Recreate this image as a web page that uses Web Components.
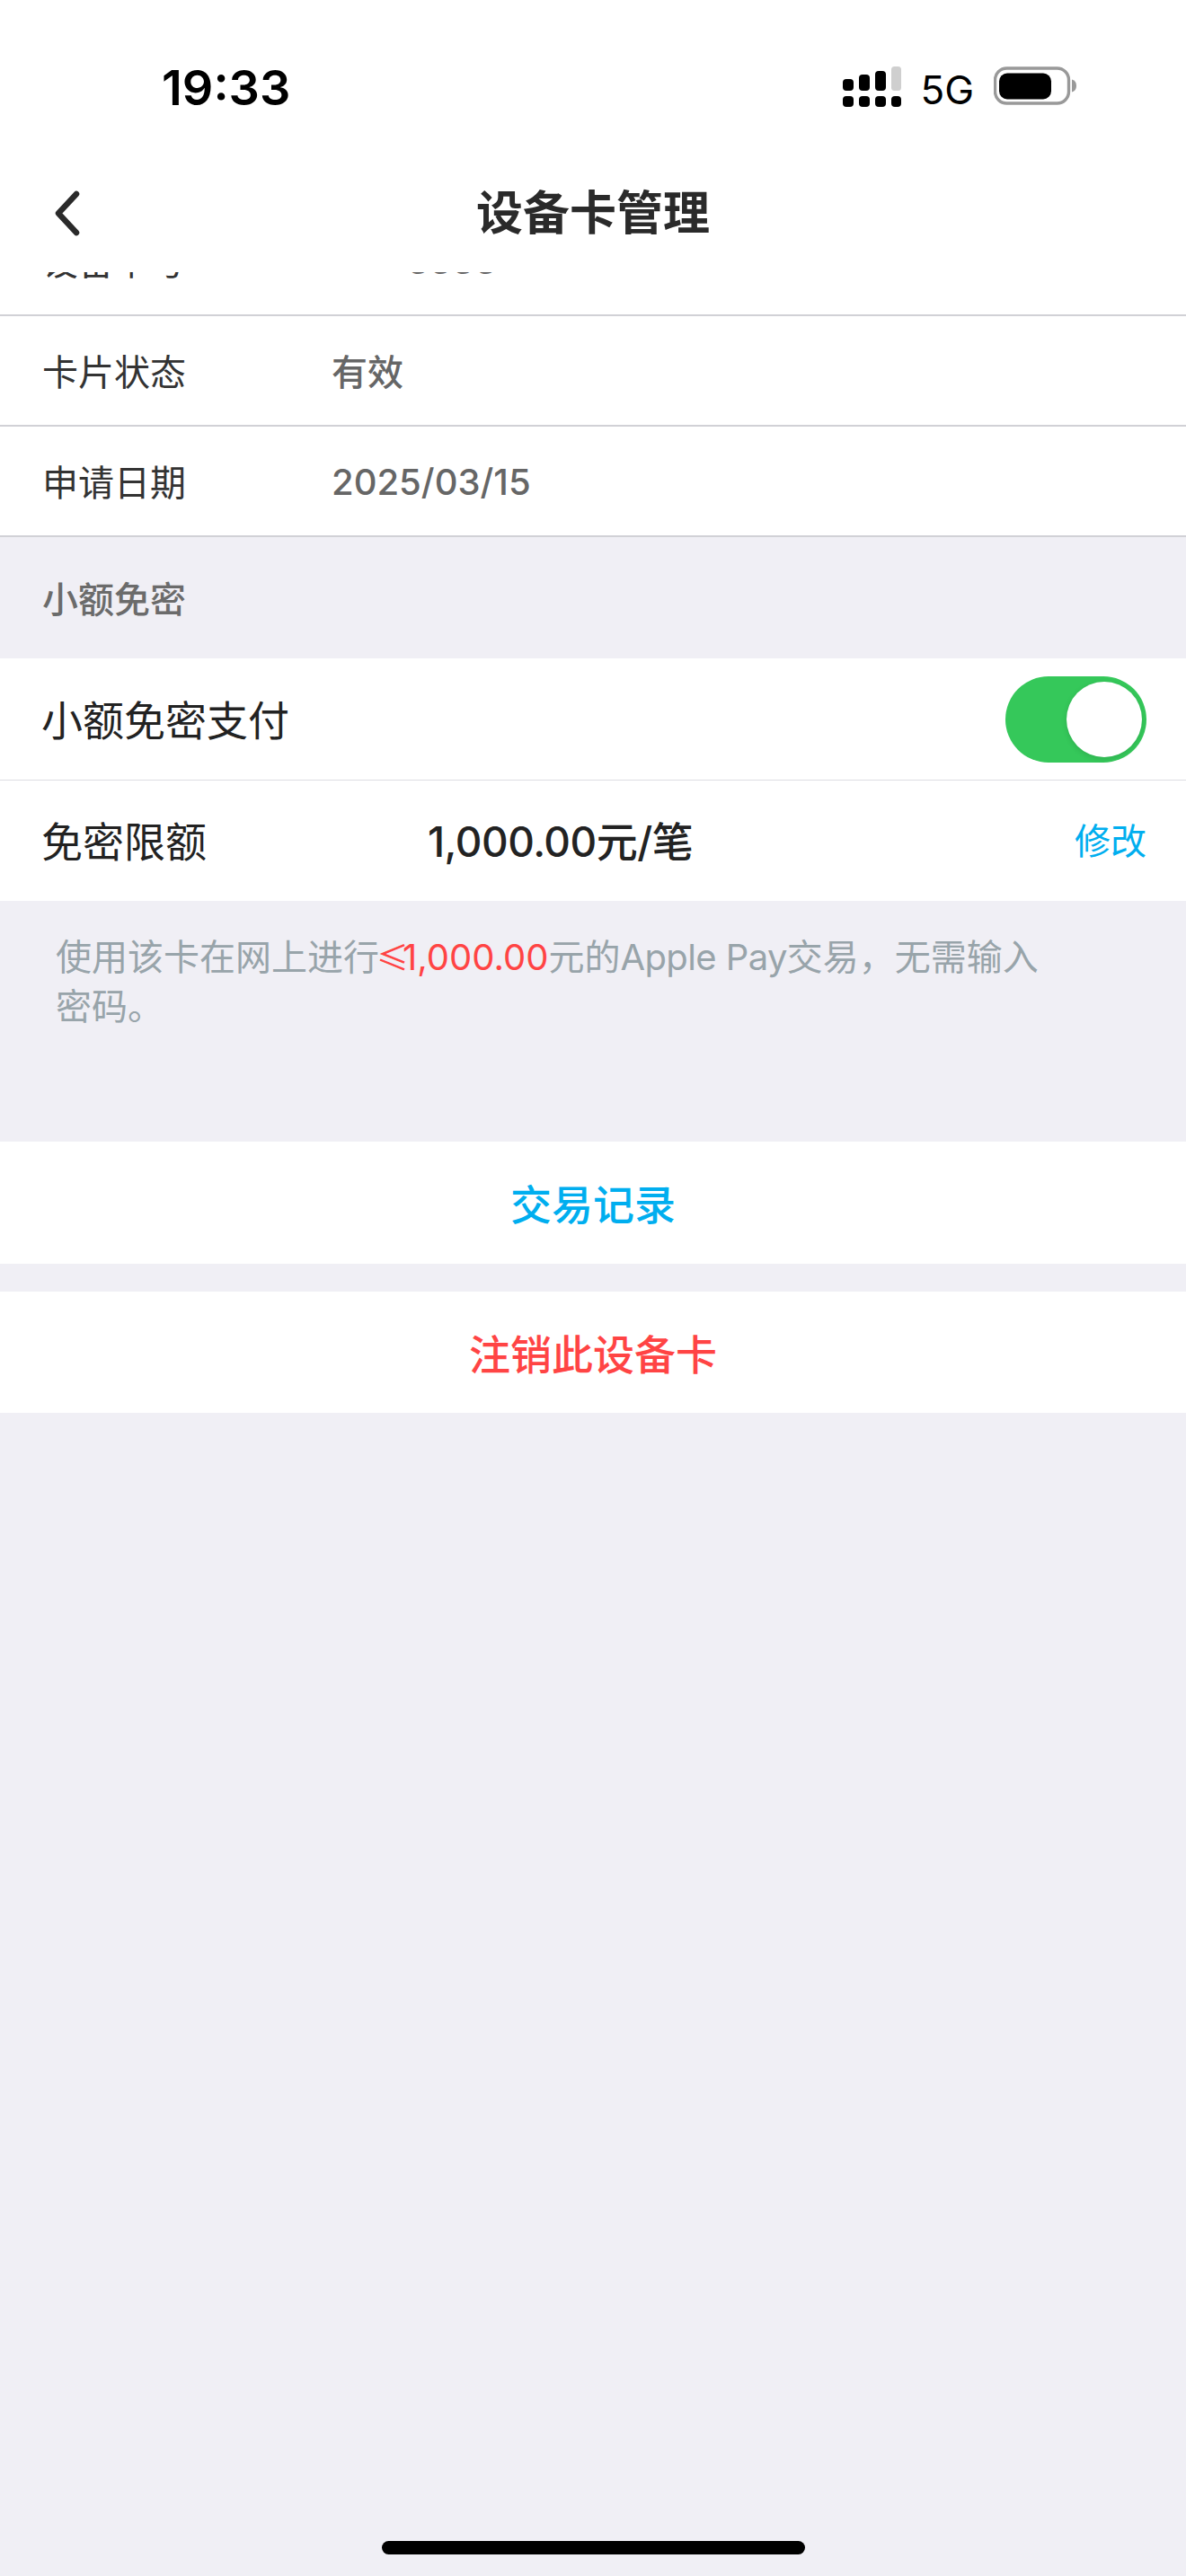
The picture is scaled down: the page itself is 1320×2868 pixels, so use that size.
<!DOCTYPE html>
<html lang="zh-CN">
<head>
<meta charset="utf-8">
<title>设备卡管理</title>
<style>
  html, body { margin: 0; padding: 0; }
  body {
    background: #f0eff5;
    font-family: Inter, "Noto Sans CJK SC", sans-serif;
    color: #222;
  }
  .page { display: flex; flex-direction: column; height: 2868px; overflow: hidden; }
  .scroll { flex: 1; min-height: 0; overflow: hidden; }
  .latin { letter-spacing: -0.6px; }
  .lte { font-family: "Noto Sans CJK SC", sans-serif; font-size: 36px; letter-spacing: -7px; margin-left: -3px; }
</style>
</head>
<body>
<div class="page">
  <status-bar></status-bar>
  <nav-bar>设备卡管理</nav-bar>
  <div class="scroll">
    <info-list>
      <info-row label="设备卡号" style="word-spacing: -10px; --value-shift: 3px">**** 3333</info-row>
      <info-row label="卡片状态">有效</info-row>
      <info-row label="申请日期" style="--value-shift: 3px">2025/03/15</info-row>
    </info-list>
    <section-title>小额免密</section-title>
    <quick-pay limit="1,000.00元/笔"></quick-pay>
    <pay-note>使用该卡在网上进行<b><span class="lte">≤</span>1,000.00</b>元的<span class="latin">Apple Pay</span>交易，无需输入密码。</pay-note>
    <action-list>
      <action-button color="#00aeef">交易记录</action-button>
      <action-button color="#ff4444">注销此设备卡</action-button>
    </action-list>
  </div>
  <home-indicator></home-indicator>
</div>

<script>
class StatusBar extends HTMLElement {
  constructor() {
    super();
    this.attachShadow({ mode: "open" });
  }

  connectedCallback() {
    this.shadowRoot.innerHTML = `
      <style>
        :host { display: flex; justify-content: space-between; height: 170px; background: #fff; color: #000; box-sizing: border-box; padding: 64px 122px 0 180px; }
        .time { font: 600 54px/68px Inter, sans-serif; }
        .right { display: flex; gap: 20px; align-items: flex-start; padding-top: 10px; }
        .net { font: 400 44px/52px Inter, sans-serif; margin-right: 2px; }
        svg { display: block; }
      </style>
      <div class="time">19:33</div>
      <div class="right">
        <svg width="66" height="46" viewBox="0 0 66 46">
          <rect x="0" y="14" width="12" height="13" rx="4" fill="#000"/>
          <rect x="18" y="9" width="12" height="18" rx="4" fill="#000"/>
          <rect x="36" y="5" width="12" height="22" rx="4" fill="#000"/>
          <rect x="54" y="0" width="11" height="27" rx="3.5" fill="#cfcfcf"/>
          <rect x="0" y="33" width="12" height="12" rx="4" fill="#000"/>
          <rect x="18" y="33" width="12" height="12" rx="4" fill="#000"/>
          <rect x="36" y="33" width="12" height="12" rx="4" fill="#000"/>
          <rect x="54" y="33" width="11" height="12" rx="4" fill="#000"/>
        </svg>
        <span class="net">5G</span>
        <svg width="92" height="44" viewBox="0 0 92 44">
          <rect x="1.5" y="2" width="82" height="39" rx="13" fill="none" stroke="#999" stroke-width="3.4"/>
          <rect x="6" y="7.5" width="58" height="29" rx="9" fill="#000"/>
          <path d="M87 14.5 c3.5 1 5 3.5 5 7 s-1.500 6 -5 7 z" fill="#999"/>
        </svg>
      </div>
    `;
  }
}

class NavBar extends HTMLElement {
  constructor() {
    super();
    this.attachShadow({ mode: "open" });
  }

  connectedCallback() {
    this.shadowRoot.innerHTML = `
      <style>
        :host { display: grid; grid-template-columns: 1fr auto 1fr; align-items: center; height: 133px; background: #fff; color: #2a2a2a; box-sizing: border-box; padding: 0 60px; }
        .title { font: 700 52px/1.2 "Noto Sans CJK SC", sans-serif; padding-bottom: 5px; }
        svg { display: block; }
      </style>
      <svg width="32" height="52" viewBox="0 0 32 52">
        <path d="M25 5 L5 26.500 L25 48" fill="none" stroke="#2a2a2a" stroke-width="6.500" stroke-linecap="round" stroke-linejoin="round"/>
      </svg>
      <div class="title"><slot></slot></div>
      <div></div>
    `;
  }
}

class InfoList extends HTMLElement {
  constructor() {
    super();
    this.attachShadow({ mode: "open" });
  }

  connectedCallback() {
    // scrolled: the first row sits partly under the nav bar
    this.shadowRoot.innerHTML = `
      <style>
        :host { display: block; margin-top: -74px; background: #fff; }
      </style>
      <slot></slot>
    `;
  }
}

class InfoRow extends HTMLElement {
  constructor() {
    super();
    this.attachShadow({ mode: "open" });
  }

  connectedCallback() {
    this.shadowRoot.innerHTML = `
      <style>
        :host { display: flex; align-items: center; height: 123px; box-sizing: border-box; border-bottom: 2px solid #d1d1d6; padding: 0 0 2px 47px; font-size: 40px; }
        .label { width: 322px; color: #333; font-family: Inter, "Noto Sans CJK SC", sans-serif; }
        .value { color: #666; font-weight: 500; font-family: Inter, "Noto Sans CJK SC", sans-serif; padding-top: var(--value-shift, 0); }
      </style>
      <div class="label"></div>
      <div class="value"><slot></slot></div>
    `;
    this.shadowRoot.querySelector(".label").textContent = this.getAttribute("label");
  }
}

class SectionTitle extends HTMLElement {
  constructor() {
    super();
    this.attachShadow({ mode: "open" });
  }

  connectedCallback() {
    this.shadowRoot.innerHTML = `
      <style>
        :host { display: flex; align-items: center; height: 135px; padding: 4px 47px 0; box-sizing: border-box; color: #6b6b6b; font: 500 40px/1.2 Inter, "Noto Sans CJK SC", sans-serif; }
      </style>
      <slot></slot>
    `;
  }
}

class QuickPay extends HTMLElement {
  constructor() {
    super();
    this.attachShadow({ mode: "open" });
  }

  connectedCallback() {
    this.shadowRoot.innerHTML = `
      <style>
        :host { display: block; background: #fff; font: 400 46px/1.2 Inter, "Noto Sans CJK SC", sans-serif; color: #222; }
        .row { display: flex; align-items: center; height: 135px; box-sizing: border-box; padding: 0 44px 0 46px; }
        .row + .row { border-top: 1.500px solid #dcdce2; }
        .name { flex: 1; padding-top: 4px; }
        .row.limit .name { flex: none; width: 430px; }
        .amount { flex: 1; font-weight: 500; padding-top: 4px; letter-spacing: -0.5px; }
        .edit { color: #00aeef; font-size: 40px; padding-top: 2px; }
        .toggle { display: block; width: 157px; height: 96px; border-radius: 48px; background: #35c85a; position: relative; }
        .toggle::after { content: ""; position: absolute; left: 68px; top: 6px; width: 84px; height: 84px; border-radius: 50%; background: #fff; box-shadow: 0 2px 6px rgba(0, 0, 0, 0.12); }
      </style>
      <div class="row">
        <div class="name">小额免密支付</div>
        <span class="toggle"></span>
      </div>
      <div class="row limit">
        <div class="name">免密限额</div>
        <div class="amount"></div>
        <div class="edit">修改</div>
      </div>
    `;
    this.shadowRoot.querySelector(".amount").textContent = this.getAttribute("limit");
  }
}

class PayNote extends HTMLElement {
  constructor() {
    super();
    this.attachShadow({ mode: "open" });
  }

  connectedCallback() {
    this.shadowRoot.innerHTML = `
      <style>
        :host { display: block; height: 268px; box-sizing: border-box; padding: 34px 150px 0 62px; color: #98a4aa; font: 400 40px/55px Inter, "Noto Sans CJK SC", sans-serif; }
        ::slotted(b) { color: #ff4444; font-weight: 400; }
      </style>
      <slot></slot>
    `;
  }
}

class ActionList extends HTMLElement {
  constructor() {
    super();
    this.attachShadow({ mode: "open" });
  }

  connectedCallback() {
    this.shadowRoot.innerHTML = `
      <style>
        :host { display: flex; flex-direction: column; gap: 31px; }
      </style>
      <slot></slot>
    `;
  }
}

class ActionButton extends HTMLElement {
  constructor() {
    super();
    this.attachShadow({ mode: "open" });
  }

  connectedCallback() {
    this.shadowRoot.innerHTML = `
      <style>
        :host { display: flex; align-items: center; justify-content: center; height: 135.5px; background: #fff; font: 500 46px/1.2 "Noto Sans CJK SC", sans-serif; color: ${this.getAttribute("color")}; }
      </style>
      <slot></slot>
    `;
  }
}

class HomeIndicator extends HTMLElement {
  constructor() {
    super();
    this.attachShadow({ mode: "open" });
  }

  connectedCallback() {
    this.shadowRoot.innerHTML = `
      <style>
        :host { display: flex; justify-content: center; padding-bottom: 24px; }
        div { width: 471px; height: 15px; border-radius: 8px; background: #000; }
      </style>
      <div></div>
    `;
  }
}

customElements.define("status-bar", StatusBar);
customElements.define("nav-bar", NavBar);
customElements.define("info-list", InfoList);
customElements.define("info-row", InfoRow);
customElements.define("section-title", SectionTitle);
customElements.define("quick-pay", QuickPay);
customElements.define("pay-note", PayNote);
customElements.define("action-list", ActionList);
customElements.define("action-button", ActionButton);
customElements.define("home-indicator", HomeIndicator);
</script>
</body>
</html>
